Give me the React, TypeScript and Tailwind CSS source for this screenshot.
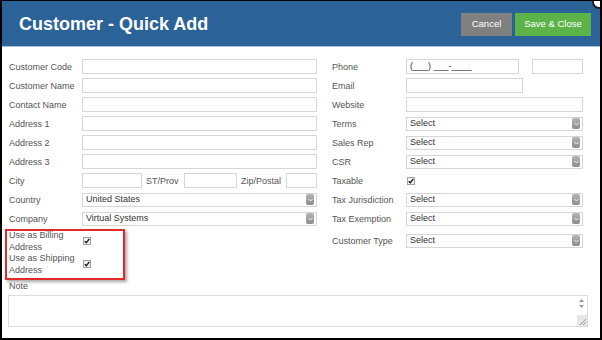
import React from "react";

const label = "text-[9px] leading-[12px] text-[#555]";

function TextBox({ w, value }: { w: string; value?: string }) {
  return (
    <div
      className={`${w} h-[15px] border border-[#d6d6d6] bg-white pl-[3px] flex items-center text-[9px] text-[#333]`}
    >
      {value}
    </div>
  );
}

function SelectBox({ value = "Select" }: { value?: string }) {
  return (
    <div className="w-full h-[14px] border border-[#d6d6d6] bg-white pl-[3px] pr-[2px] flex items-center justify-between text-[9px] text-[#333]">
      <span>{value}</span>
      {/* little gray dropdown button */}
      <span className="w-[8px] h-[11px] rounded-[2px] bg-gradient-to-b from-[#b5b5b5] to-[#8d8d8d] flex items-center justify-center">
        <svg width="5" height="4" viewBox="0 0 5 4">
          <path d="M0.5 1 L2.5 3 L4.5 1" fill="none" stroke="#f2f2f2" strokeWidth="1" />
        </svg>
      </span>
    </div>
  );
}

function Check() {
  return (
    <span className="w-[8px] h-[8px] border border-[#a0a0a0] bg-[#f0f0f0] flex items-center justify-center">
      <svg width="6" height="6" viewBox="0 0 6 6">
        <path d="M0.8 3.2 L2.3 4.8 L5.3 0.9" fill="none" stroke="#111" strokeWidth="1.3" />
      </svg>
    </span>
  );
}

function Row({ name, children }: { name: string; children: React.ReactNode }) {
  return (
    <div className="flex items-center h-[15px]">
      <div className={`${label} w-[73px] shrink-0`}>{name}</div>
      <div className="flex-1 flex items-center">{children}</div>
    </div>
  );
}

function RRow({ name, children }: { name: string; children: React.ReactNode }) {
  return (
    <div className="flex items-center h-[15px]">
      <div className={`${label} w-[74px] shrink-0`}>{name}</div>
      <div className="flex-1 flex items-center">{children}</div>
    </div>
  );
}

export default function App() {
  return (
    <div className="relative w-[602px] h-[340px] overflow-hidden bg-white border-black border-t border-x-2 border-b-2 font-['Liberation_Sans',Arial,sans-serif]">
      {/* Header */}
      <div className="h-[46px] bg-[#2b6298] border-b border-[#a9c3dc] flex items-center justify-between pl-[17px] pr-[9px]">
        <h1 className="text-[18px] font-bold text-white leading-none">Customer - Quick Add</h1>
        <div className="flex gap-[3px] mt-[1px]">
          <button className="w-[51px] h-[23px] bg-[#808080] text-white text-[9.5px]">Cancel</button>
          <button className="w-[76px] h-[23px] bg-[#5cb34a] text-white text-[9.5px]">Save &amp; Close</button>
        </div>
      </div>

      {/* Close button, peeking in at the corner */}
      <div className="absolute right-[-6px] top-[-6px] w-[14px] h-[14px] rounded-full bg-white border-2 border-[#222]" />

      {/* Body */}
      <div className="pl-[7px] pt-[12px]">
        <div className="flex gap-[15px]">
          {/* Left column */}
          <div className="w-[308px] flex flex-col">
            <div className="flex flex-col gap-[4px]">
              <Row name="Customer Code"><TextBox w="w-full" /></Row>
              <Row name="Customer Name"><TextBox w="w-full" /></Row>
              <Row name="Contact Name"><TextBox w="w-full" /></Row>
              <Row name="Address 1"><TextBox w="w-full" /></Row>
              <Row name="Address 2"><TextBox w="w-full" /></Row>
              <Row name="Address 3"><TextBox w="w-full" /></Row>
              <div className="flex items-center h-[15px]">
                <div className={`${label} w-[73px] shrink-0`}>City</div>
                <TextBox w="w-[60px]" />
                <div className={`${label} ml-[4px] w-[38px]`}>ST/Prov</div>
                <TextBox w="w-[53px]" />
                <div className={`${label} ml-[4px] w-[45px]`}>Zip/Postal</div>
                <TextBox w="w-[31px]" />
              </div>
              <Row name="Country"><SelectBox value="United States" /></Row>
              <Row name="Company"><SelectBox value="Virtual Systems" /></Row>
            </div>
            <div className="mt-[3px] flex items-center h-[23px]">
              <div className={`${label} w-[74px]`}>
                Use as Billing
                <br />
                Address
              </div>
              <Check />
            </div>
            <div className="flex items-center h-[23px]">
              <div className={`${label} w-[74px]`}>
                Use as Shipping
                <br />
                Address
              </div>
              <Check />
            </div>
          </div>

          {/* Right column */}
          <div className="w-[251px] flex flex-col">
            <div className="flex flex-col gap-[4px]">
              <RRow name="Phone">
                <TextBox w="w-[113px]" value="(___) ___-____" />
                <div className="ml-[13px]">
                  <TextBox w="w-[51px]" />
                </div>
              </RRow>
              <RRow name="Email"><TextBox w="w-[117px]" /></RRow>
              <RRow name="Website"><TextBox w="w-full" /></RRow>
              <RRow name="Terms"><SelectBox /></RRow>
              <RRow name="Sales Rep"><SelectBox /></RRow>
              <RRow name="CSR"><SelectBox /></RRow>
              <RRow name="Taxable">
                <span className="ml-[1px]"><Check /></span>
              </RRow>
              <RRow name="Tax Jurisdiction"><SelectBox /></RRow>
              <RRow name="Tax Exemption"><SelectBox /></RRow>
            </div>
            <div className="mt-[3px] flex items-center h-[23px]">
              <div className={`${label} w-[74px] shrink-0`}>Customer Type</div>
              <SelectBox />
            </div>
          </div>
        </div>

        {/* Note */}
        <div className={`${label} mt-[5px]`}>Note</div>
        <div className="relative mt-[3px] ml-[-1px] w-[580px] h-[32px] border border-[#dcdcdc] bg-white">
          <div className="absolute right-[3px] top-[3px] flex flex-col items-center gap-[3px]">
            <svg width="5" height="3" viewBox="0 0 5 3"><path d="M0 3 L2.5 0 L5 3Z" fill="#9a9a9a" /></svg>
            <svg width="5" height="3" viewBox="0 0 5 3"><path d="M0 0 L2.5 3 L5 0Z" fill="#9a9a9a" /></svg>
          </div>
          <div className="absolute right-0 bottom-0 w-[10px] h-[11px] bg-[#e6e6e6]">
            <svg width="10" height="11" viewBox="0 0 10 11">
              <path d="M3 10 L9 4 M6 10 L9 7" stroke="#888" strokeWidth="0.8" />
            </svg>
          </div>
        </div>
      </div>

      {/* Red annotation box around the address checkboxes */}
      <div className="absolute left-[3px] top-[228px] w-[120px] h-[51px] border-2 border-[#e12a2a] shadow-[2px_2px_3px_rgba(0,0,0,0.35)]" />
    </div>
  );
}
